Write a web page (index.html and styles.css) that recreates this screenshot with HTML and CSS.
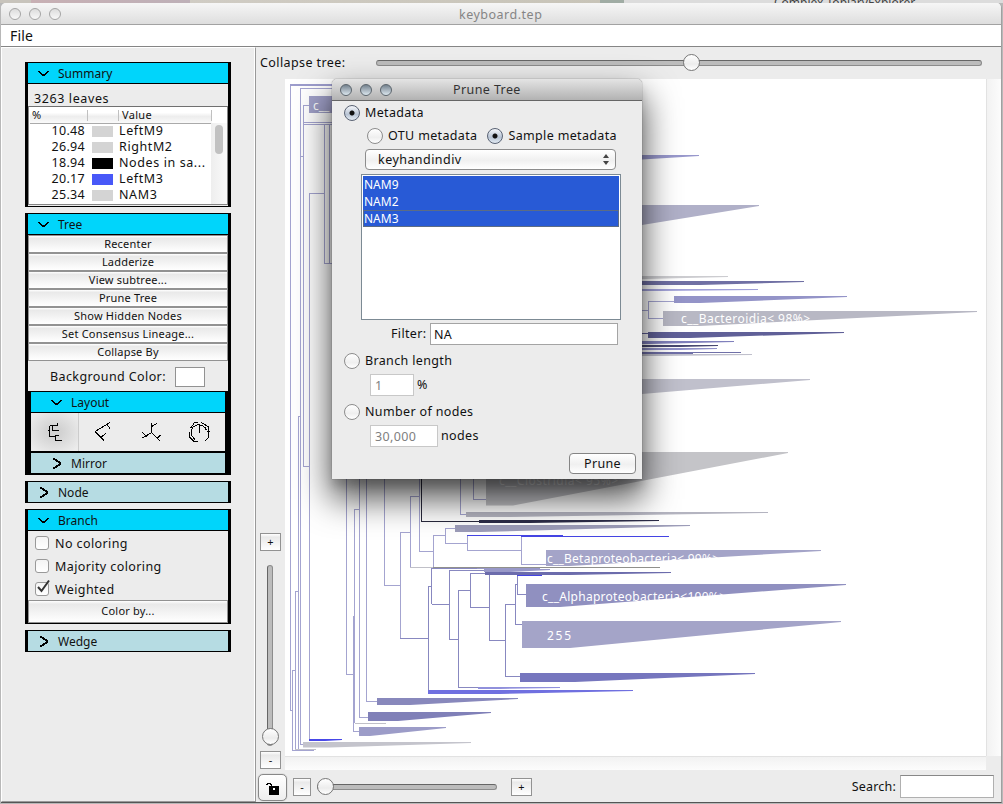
FILE: index.html
```html
<!DOCTYPE html>
<html lang="en">
<head>
<meta charset="utf-8">
<title>keyboard.tep</title>
<link rel="stylesheet" href="styles.css">
</head>
<body>
<svg width="0" height="0" class="defs">
  <symbol id="open" viewBox="0 0 11 5"><path d="M0 0h2v1h1v1h1v1h3v-1h1v-1h1v-1h2v1h-1v1h-1v1h-1v1h-1v1h-3v-1h-1v-1h-1v-1h-1v-1h-1z"/></symbol>
  <symbol id="shut" viewBox="0 0 8 11"><path d="M0 0h2v1h2v1h1v1h2v1h1v3h-1v1h-2v1h-1v1h-2v1h-2v-2h2v-1h1v-1h2v-1h1v-1h-1v-1h-2v-1h-1v-1h-2z"/></symbol>
</svg>
<div class="backdrop"><span class="behind">Complex TopiaryExplorer</span></div>
<div class="window">
  <header class="titlebar">
    <i class="light"></i><i class="light"></i><i class="light"></i>
    <span class="title">keyboard.tep</span>
  </header>
  <nav class="menubar">File</nav>
  <div class="content">
    <aside class="sidebar">
      <section class="group summary">
        <h2 class="head"><svg class="chev"><use href="#open"/></svg>Summary</h2>
        <p class="leaves">3263 leaves</p>
        <div class="table">
          <div class="thead"><span class="c1">%</span><span class="c2"></span><span class="c3">Value</span></div>
          <div class="scroll">
            <div class="rows">
              <div class="row"><span class="num">10.48</span><i class="swatch"></i><span>LeftM9</span></div>
              <div class="row"><span class="num">26.94</span><i class="swatch"></i><span>RightM2</span></div>
              <div class="row"><span class="num">18.94</span><i class="swatch black"></i><span>Nodes in sa...</span></div>
              <div class="row"><span class="num">20.17</span><i class="swatch blue"></i><span>LeftM3</span></div>
              <div class="row"><span class="num">25.34</span><i class="swatch"></i><span>NAM3</span></div>
            </div>
            <div class="track"><i class="thumb"></i></div>
          </div>
        </div>
      </section>
      <section class="group tree">
        <h2 class="head"><svg class="chev"><use href="#open"/></svg>Tree</h2>
        <button class="btn">Recenter</button>
        <button class="btn">Ladderize</button>
        <button class="btn">View subtree...</button>
        <button class="btn">Prune Tree</button>
        <button class="btn">Show Hidden Nodes</button>
        <button class="btn">Set Consensus Lineage...</button>
        <button class="btn">Collapse By</button>
        <div class="bgcolor"><span>Background Color:</span><i class="well"></i></div>
        <div class="nested">
          <h2 class="head"><svg class="chev"><use href="#open"/></svg>Layout</h2>
          <div class="layouts">
            <span class="lay on"><svg viewBox="0 0 48 38"><path d="M16.5 17.500h2M18.500 12.500v11M18.500 12.500h8v-2M26.500 9.500v3M26.500 12.500M18.500 23.500h6M24.500 21.500v6h6.500M24.500 22.500h3.500M21.500 13v4.500h6"/></svg></span>
            <span class="lay"><svg viewBox="0 0 48 38"><path d="M16 18.500L31 9.500M28 11.500L31 15.500M16 18.500L25 27.500M22 24.500L27 20"/></svg></span>
            <span class="lay"><svg viewBox="0 0 48 38"><path d="M24.500 9.500v10M24.500 13.500L30 10.500M24.500 19.500L33.500 28.500M30 25.500L33.500 22M24.500 19.500L15.500 25M19 23L15.500 19.500M19 23v1"/></svg></span>
            <span class="lay"><svg viewBox="0 0 48 38"><path d="M24.500 12v8M19 13.500Q24.500 9.500 30 14.500L31.500 17.500M31.500 18.500h3M19 10.500L15.500 15M14.500 19v5L19 28.500h4M18.500 13L16.500 17v5L20 27M19 9.500h4M26.500 9.500L33 13.500V25L30 28"/></svg></span>
          </div>
          <h2 class="head closed mirror"><svg class="chev"><use href="#shut"/></svg>Mirror</h2>
        </div>
      </section>
      <section class="group"><h2 class="head closed"><svg class="chev"><use href="#shut"/></svg>Node</h2></section>
      <section class="group branch">
        <h2 class="head"><svg class="chev"><use href="#open"/></svg>Branch</h2>
        <label class="check"><i class="box"></i>No coloring</label>
        <label class="check"><i class="box"></i>Majority coloring</label>
        <label class="check"><i class="box"><svg viewBox="0 0 16 16"><path d="M3 8L6.500 12L14 1.500"/></svg></i>Weighted</label>
        <button class="btn tall">Color by...</button>
      </section>
      <section class="group"><h2 class="head closed"><svg class="chev"><use href="#shut"/></svg>Wedge</h2></section>
    </aside>
    <main class="main">
      <div class="collapse"><span class="collapselabel">Collapse tree:</span><div class="slider top"><i class="knob"></i></div></div>
      <div class="middle">
        <div class="vzoom">
          <button class="sq">+</button>
          <div class="vslider"><i class="knob"></i></div>
          <button class="sq">-</button>
        </div>
        <div class="canvas">
          <svg class="phylo" viewBox="285 79 701 677">
            <g class="ln">
              <path d="M290.500 84V710.500H292.500M292.500 750.500V670.500H295.500M292 750.500H314M295.500 749V591.500H298.500M298.500 749V416.500H300.500M300.500 88V744.500H303M300.500 88.500H332M300.500 156.500H303.500M303.500 105V466.500H309M303.500 105.500H309M304 122.500H332M304 124.500H332M309.500 739V193.500H324.500M324.500 125V263.500H332M329.500 125V263"/>
              <path d="M346.500 470V674.500H353.500M353.500 616V731.500H359M354.500 723V509.500H359.500M359.500 470V717.500H368M366.500 470V701.500H377M384.500 470V585.500H400.500M400.500 638.500V532.500H410.500M410.500 567V496.500H419.500M419.500 470V551.500H433.500M433.500 567V535.500H445.500M445.500 543.500V528.500H455M445.500 543.500H467.500M467.500 535V550.500H521.500M521.500 536V564.500H546M460.500 470V514.500H466M473.500 470V499.500H486"/>
              <path d="M642 310.500H648.500M674 301.500H648.500V318.500H663"/>
            </g>
            <g class="ln deep">
              <path d="M400 638.500H428.500M428.500 690V586.500H431.500M431.500 604V568.500H477M431.500 604.500H449.500M484 570.500H449.500V639.500H458.500M458.500 687V590.500H470.500M458 687.500H480M485 573.500H470.500V607.500H489.500M489.500 574V640.500H505.500M505.500 604V676.500H520M505.500 604.500H515.500M517.500 584.500H515.500V624.500H522M517.500 575V594.500H526M489 574.500H544"/>
              <path class="thick" d="M290 85H332"/>
            </g>
            <path class="gray" d="M354.500 723.500H386M410 567.500H433M295 749.500H316"/>
            <path class="graydark" d="M433 567.500H660"/>
            <path class="black" d="M421.500 470V521.500H480"/>
            <path class="blue" d="M467 535.500H563M517 575.500H542M521 536.500H669"/>
            <g shape-rendering="auto">
              <path fill="#a0a0c8" d="M309 96H340V113H309z"/>
              <path fill="#9c9cc8" d="M359 727H446V728L370 736H359z"/>
              <path fill="#8080b8" d="M368 712H491V713L398 721H368z"/>
              <path fill="#8888bc" d="M377 698H518V699L410 705H377z"/>
              <path fill="#4848e8" d="M309 739H342V740L325 741H309z"/>
              <path fill="#c4c4cc" d="M303 742H471V743L330 747.500H303z"/>
              <path fill="#c4c4c8" d="M486 452H788V453L513 505.500H486z"/>
              <path fill="#b4b4c0" d="M466 512H768V513L510 517H466z"/>
              <path fill="#2c2c48" d="M479 520H659V521L530 523H479z"/>
              <path fill="#9c9cb8" d="M455 525H690V526L480 532H455z"/>
              <path fill="#a4a4c8" d="M546 550H821V551L570 566H546z"/>
              <path fill="#9898c8" d="M484 569H550V570L510 572H484zM477 568H540V569H477z"/>
              <path fill="#6c6cac" d="M485 572H671V573L570 575H485z"/>
              <path fill="#9090c0" d="M526 584H846V585L560 607H526z"/>
              <path fill="#a4a4c8" d="M522 621H841V622L570 648H522z"/>
              <path fill="#7676be" d="M520 673H755V674L575 682H520z"/>
              <path fill="#9090dc" d="M478 687H560V688L500 689H478z"/>
              <path fill="#7070e0" d="M428 690H633V691L500 694H428z"/>
              <path fill="#9898cc" d="M620 155H699V156L642 159.500H620z"/>
              <path fill="#b0b0c8" d="M620 205H759V206L642 225L620 227z"/>
              <path fill="#ccccd0" d="M620 276H728V277L645 279H620z"/>
              <path fill="#7070a4" d="M620 281H804V282L700 285H620z"/>
              <path fill="#a0a0d8" d="M620 289H758V290L660 291H620z"/>
              <path fill="#9494c8" d="M674 296H847V297L700 303H674z"/>
              <path fill="#b8b8c4" d="M663 311H977V312L700 326H663z"/>
              <path fill="#606098" d="M648 332H844V333L690 338H648zM642 333H648V334H642z"/>
              <path fill="#8080bc" d="M620 341H734V342L650 344H620z"/>
              <path fill="#484870" d="M620 345H718V346L680 347H620z"/>
              <path fill="#9090c8" d="M620 348H717V349L680 350H620z"/>
              <path fill="#7070a8" d="M620 352H741V353H693V354H620z"/>
              <path fill="#c0c0cc" d="M620 354H752V355L660 356H620z"/>
              <path fill="#c0c0cc" d="M620 379H810V380L642 394H620z"/>
            </g>
            <g class="labels">
              <text x="313" y="110">c__</text>
              <text x="681" y="323" textLength="129">c__Bacteroidia&lt; 98%&gt;</text>
              <text x="499" y="485" textLength="119" opacity=".6">c__Clostridia&lt; 95%&gt;</text>
              <text x="547" y="563" textLength="172">c__Betaproteobacteria&lt; 99%&gt;</text>
              <text x="542" y="601" textLength="184">c__Alphaproteobacteria&lt;100%&gt;</text>
              <text x="547" y="640" textLength="24">255</text>
            </g>
          </svg>
          <div class="vbar"></div>
          <div class="hbar"></div>
        </div>
      </div>
      <footer class="bottom">
        <button class="lock"><svg viewBox="0 0 14 13"><path d="M1 3V2h1V1h3v1h1v3" fill="none" stroke="#000"/><path d="M4 4h10v9H4z"/><path d="M8 6h2v2h-1v3H8.500V8H8z" fill="#fff"/></svg></button>
        <button class="sq small">-</button>
        <div class="slider short"><i class="knob"></i></div>
        <button class="sq">+</button>
        <span class="searchlabel">Search:</span>
        <input class="search" aria-label="Search">
      </footer>
    </main>
  </div>
</div>

<div class="dialog">
  <header class="dtitle"><i class="light"></i><i class="light"></i><i class="light"></i><span>Prune Tree</span></header>
  <div class="dbody">
    <label class="radio r1"><i class="dot on"></i>Metadata</label>
    <div class="pair"><label class="radio"><i class="dot"></i>OTU metadata</label><label class="radio"><i class="dot on"></i>Sample metadata</label></div>
    <div class="select"><span>keyhandindiv</span><svg viewBox="0 0 6 11"><path d="M0 4L3 0L6 4zM0 7L3 11L6 7z"/></svg></div>
    <ul class="list"><li>NAM9</li><li>NAM2</li><li class="focus">NAM3</li></ul>
    <div class="filter"><span>Filter:</span><input value="NA" aria-label="Filter"></div>
    <label class="radio r2"><i class="dot"></i>Branch length</label>
    <div class="amount"><input class="w1" value="1" disabled><span>%</span></div>
    <label class="radio r3"><i class="dot"></i>Number of nodes</label>
    <div class="amount"><input class="w2" value="30,000" disabled><span>nodes</span></div>
    <button class="prune">Prune</button>
  </div>
</div>
</body>
</html>
```
FILE: styles.css
```css
* { box-sizing: border-box; margin: 0; padding: 0; }
body {
  width: 1003px; height: 804px; overflow: hidden; position: relative;
  background: #b8b8b8; color: #111;
  font: 12.5px/16px "Noto Sans", "Open Sans", sans-serif;
}
button, input { font: inherit; color: inherit; border-radius: 0; outline: 0; display: block; letter-spacing: inherit; }
button { text-align: center; white-space: nowrap; }
i { display: block; flex: none; }
svg { display: block; flex: none; }
.defs { display: none; }

.backdrop {
  height: 3px; overflow: hidden; padding-left: 774px; color: #444;
  background: linear-gradient(90deg, #c8c4bc 31px, #c8b0b4 31px, #beb0b8 190px, #d0ccc4 190px, #c8c4b8 600px, #a0aca4 600px, #a0aca4 624px, #dcdcdc 624px);
}
.behind { display: block; margin-top: -4px; font-size: 12px; line-height: 14px; white-space: nowrap; }
.window {
  width: 1001px; height: 800px; margin-left: 1px; background: #ececec; border-radius: 5px 5px 0 0;
  border-right: 1px solid #a0a0a0; border-bottom: 1px solid #555;
  display: flex; flex-direction: column; overflow: hidden;
}
.titlebar {
  height: 22px; display: flex; align-items: center; padding-left: 8px; gap: 8px;
  background: linear-gradient(#f6f6f6, #dedede); border-bottom: 1px solid #a2a2a2; color: #858585;
}
.light { width: 12px; height: 12px; border-radius: 50%; border: 1px solid #a4a4a4; background: linear-gradient(#dcdcdc, #f8f8f8); }
.title { margin: 2px 0 0 390px; letter-spacing: .5px; }
.menubar { height: 22px; background: #fff; border-bottom: 1px solid #858585; padding: 2px 0 0 9px; font-size: 14px; line-height: 18px; letter-spacing: .2px; }
.content { flex: 1; display: flex; min-height: 0; }

.sidebar {
  width: 255px; padding: 14px 0 0 23px; border-left: 1px solid #fff; border-right: 1px solid #999;
  border-top: 1px solid #fff; border-bottom: 1px solid #999; box-shadow: inset -1px 0 #fff;
  display: flex; flex-direction: column; gap: 6px;
}
.group { width: 206px; border: 1px solid #000; border-width: 1px 3px; flex: none; }
.head {
  height: 21px; background: #00d5fb; border-bottom: 1px solid #000; display: flex; align-items: center;
  padding: 1px 0 0 10px; gap: 9px; font-size: 12px; font-weight: 400; line-height: 16px;
}
.head.closed { background: #b6dce3; height: 20px; border-bottom: 0; }
.chev { width: 11px; height: 5px; shape-rendering: crispEdges; }
.closed .chev { height: 11px; margin-top: -1px; }
.summary { height: 145px; }
.leaves { height: 22px; padding: 6px 0 0 6px; letter-spacing: .6px; line-height: 17px; white-space: nowrap; }
.table { height: 99px; border: 1px solid #858585; border-top-color: #707070; background: #fff; overflow: hidden; padding-left: 1px; }
.thead { height: 17px; width: 182px; display: flex; font-size: 11px; line-height: 15px; border-bottom: 1px solid #aaa; background: linear-gradient(#fff 35%, #ededed 60%, #fafafa); }
.c1 { width: 57px; padding-left: 2px; }
.c2 { width: 32px; border: 1px solid #c0c0c0; border-width: 0 1px; margin: 3px 0 2px; }
.c3 { flex: 1; border-right: 1px solid #c0c0c0; padding-left: 3px; margin: 3px 0 2px; line-height: 10px; letter-spacing: .3px; }
.scroll { display: flex; margin-top: -1px; }
.rows { width: 181px; }
.row { height: 16px; display: flex; align-items: center; letter-spacing: .6px; line-height: 16px; white-space: nowrap; }
.num { width: 55px; text-align: right; letter-spacing: .3px; }
.swatch { width: 21px; height: 11px; background: #d4d4d4; margin: 0 6px 0 7px; }
.swatch.black { background: #000; }
.swatch.blue { background: #4858f8; }
.track { width: 16px; height: 82px; background: linear-gradient(90deg, #eee, #fafafa); padding: 2px 0 0 4px; }
.thumb { width: 8px; height: 29px; border-radius: 4px; background: #c1c1c1; }
.btn {
  width: 200px; height: 18px; border: 1px solid #929292; background: linear-gradient(#fff, #e9e9e9 15%, #fff);
  font-size: 11px; line-height: 14px; letter-spacing: .2px; padding-bottom: 1px;
}
.btn.tall { height: 23px; }
.tree { height: 262px; }
.bgcolor { height: 30px; display: flex; align-items: center; padding: 1px 0 0 22px; gap: 9px; letter-spacing: .4px; white-space: nowrap; }
.well { width: 30px; height: 20px; background: #fff; border: 1px solid #929292; }
.nested { border: 1px solid #000; border-width: 1px 3px 2px; }
.nested .head { padding-left: 20px; }
.layouts { height: 38px; display: flex; }
.lay { width: 48px; }
.lay.on { background: radial-gradient(ellipse at 50% 50%, #d2d2d2 20%, #ececec 90%); border-right: 1px solid #ccc; }
.lay svg { width: 48px; height: 38px; fill: none; stroke: #000; stroke-width: 1; shape-rendering: crispEdges; }
.nested .mirror { border-top: 2px solid #000; height: 22px; }
.branch { height: 115px; }
.check { height: 23px; display: flex; align-items: center; padding: 2px 0 0 7px; gap: 6px; letter-spacing: .4px; }
.box { width: 14px; height: 14px; border: 1px solid #999; border-radius: 3px; background: linear-gradient(#f4f4f4, #fff); margin-top: -1px; }
.box svg { width: 16px; height: 16px; margin: -4px 0 0 -1px; fill: none; stroke: #333; stroke-width: 2; }

.main { flex: 1; display: flex; flex-direction: column; min-width: 0; }
.collapse { height: 32px; display: flex; align-items: center; padding: 0 0 1px 4px; letter-spacing: .4px; }
.collapselabel { width: 116px; }
.slider { height: 6px; border: 1px solid #8c8c8c; border-top-color: #666; border-radius: 3px; background: #bcbcbc; display: flex; align-items: center; }
.slider.top { width: 606px; padding-left: 306px; }
.knob { width: 17px; height: 17px; border: 1px solid #777; border-radius: 50%; background: linear-gradient(#fff, #ececec 60%, #fff); }
.middle { height: 691px; display: flex; }
.vzoom { width: 29px; padding: 454px 0 0 4px; }
.sq { width: 21px; height: 18px; border: 1px solid #929292; background: linear-gradient(#fff, #e9e9e9 20%, #fff); font-size: 11px; line-height: 14px; }
.vslider { width: 6px; height: 181px; margin: 14px 0 5px 7px; border: 1px solid #8c8c8c; border-left-color: #666; border-radius: 3px; background: #bcbcbc; display: flex; flex-direction: column; justify-content: flex-end; align-items: center; }
.canvas { width: 716px; display: grid; grid-template: 677px 14px / 701px 15px; }
.phylo { width: 701px; height: 677px; background: #fff; shape-rendering: crispEdges; }
.phylo .ln { fill: none; stroke: #a4a4d0; }
.phylo .deep { stroke: #8888c0; }
.phylo .thick { stroke: #9c9ccc; stroke-width: 2; }
.phylo .gray { fill: none; stroke: #c0c0c8; }
.phylo .graydark { fill: none; stroke: #90908c; }
.phylo .black { fill: none; stroke: #28283c; }
.phylo .blue { fill: none; stroke: #4444e4; }
.labels { fill: #fff; font-size: 12px; }
.vbar { background: linear-gradient(90deg, #e2e2e2 1px, #f2f2f2 1px, #fcfcfc); }
.hbar { background: linear-gradient(#e2e2e2 1px, #f2f2f2 1px, #fcfcfc); }
.bottom { flex: 1; display: flex; align-items: center; padding: 0 7px 1px 2px; }
.lock { width: 29px; height: 27px; border: 1px solid #888; border-radius: 5px; background: linear-gradient(#fff, #eee); padding: 2px 0 0 6px; margin-top: 3px; box-shadow: 0 0 1px #888; }
.lock svg { width: 14px; height: 13px; shape-rendering: crispEdges; }
.bottom .sq { margin-top: 2px; }
.bottom .sq.small { width: 18px; margin-left: 6px; }
.slider.short { width: 180px; margin: 2px 14px 0 6px; }
.short .knob { margin-left: -1px; }
.searchlabel { margin: 2px 4px 0 auto; letter-spacing: .2px; }
.search { width: 94px; height: 23px; border: 1px solid #b0b0b0; border-top-color: #888; background: #fff; margin-top: 2px; }

/* floating tool window */
.dialog {
  position: absolute; left: 332px; top: 79px; width: 310px; height: 400px; background: #ececec;
  border-radius: 5px 5px 0 0; box-shadow: 0 0 1px #333, 0 18px 34px 2px rgba(0,0,0,.68), 0 8px 8px rgba(0,0,0,.12);
  letter-spacing: .35px;
}
.dtitle { height: 22px; display: flex; align-items: center; gap: 8px; padding-left: 8px; border-radius: 5px 5px 0 0; border-bottom: 1px solid #666; background: linear-gradient(#e4e4e4, #b2b2b2); }
.dtitle .light { border-color: #5c656d; background: linear-gradient(#74828e, #a8b4be 50%, #dbe7ef); }
.dtitle span { margin: 1px 0 0 53px; color: #333; letter-spacing: .4px; }
.radio { display: flex; align-items: center; gap: 5px; height: 17px; white-space: nowrap; }
.dot { width: 16px; height: 16px; border-radius: 50%; border: 1px solid #8c8c8c; background: linear-gradient(#fff, #efefef 60%, #fff); }
.dot.on { border-color: #596273; background: radial-gradient(circle, #111 0 2px, transparent 3px), linear-gradient(#f4f6fa, #b8c4d4 60%, #e4ecf4); }
.r1 { margin: 3px 0 0 12px; }
.pair { display: flex; margin: 6px 0 0 35px; gap: 10px; }
.select { margin: 5px 0 0 33px; width: 251px; height: 21px; border: 1px solid #8c8c8c; border-radius: 4px; background: linear-gradient(#fff, #f0f0f0 55%, #fff); display: flex; align-items: center; justify-content: space-between; padding: 0 6px 0 12px; letter-spacing: .45px; }
.select svg { width: 6px; height: 11px; fill: #444; }
.list { list-style: none; margin: 4px 0 0 29px; width: 260px; height: 146px; border: 1px solid #7c8a94; background: #fff; padding: 1px; }
.list li { height: 17px; background: #285ad6; color: #fff; font-size: 12px; line-height: 17px; padding-left: 1px; letter-spacing: 0; }
.list .focus { border: 1px solid #5c6c84; line-height: 15px; padding-left: 0; }
.filter { display: flex; align-items: center; margin: 3px 0 0 59px; }
.filter span { width: 39px; }
.filter input { width: 188px; height: 22px; border: 1px solid #a4a4a4; background: #fff; padding-left: 3px; }
.r2, .r3 { margin: 7px 0 0 12px; }
.amount { display: flex; align-items: center; gap: 3px; margin: 5px 0 0 38px; }
.amount input { height: 22px; border: 1px solid #c8c8c8; background: #fff; color: #808080; padding-left: 4px; }
.w1 { width: 44px; }
.w2 { width: 68px; }
.prune { width: 67px; height: 21px; border: 1px solid #858585; border-radius: 4px; background: linear-gradient(#fff, #f0f0f0 55%, #fff); margin: 6px 0 0 237px; line-height: 17px; }
```
